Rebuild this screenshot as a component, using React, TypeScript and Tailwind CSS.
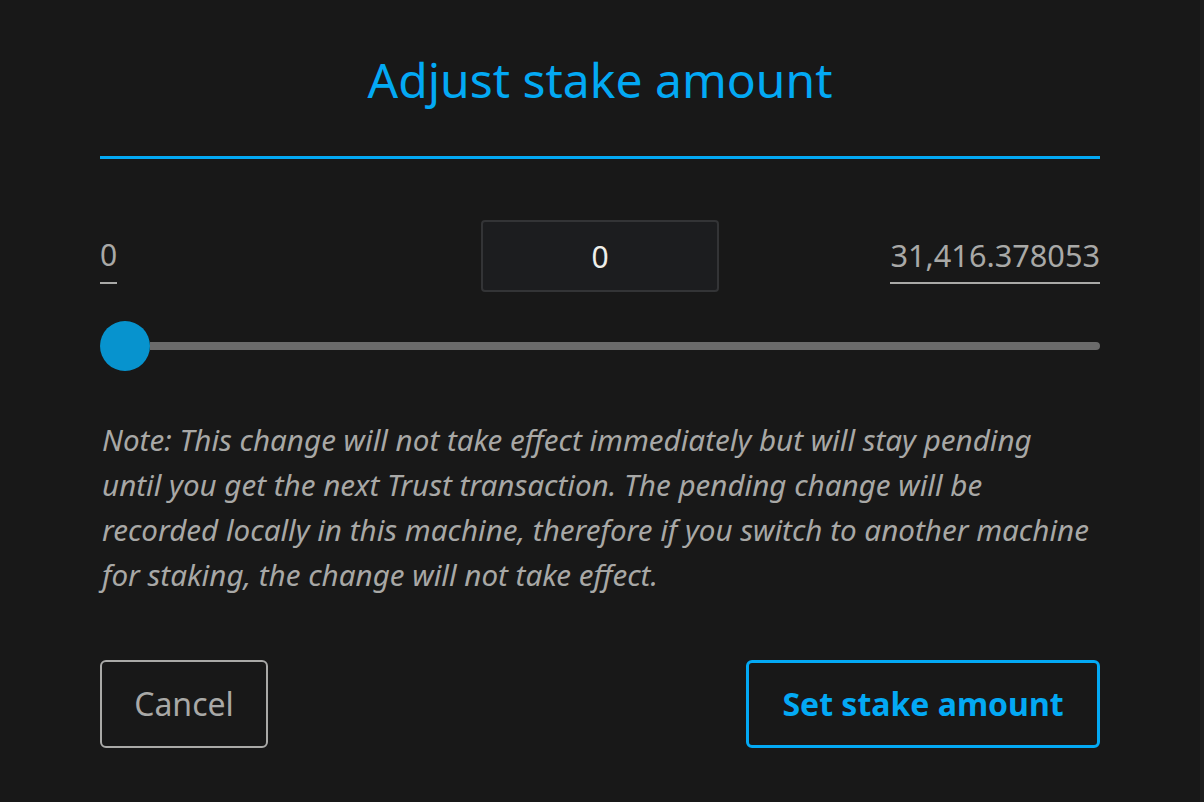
const Ghost = ({className, children}: {className: string, children: React.ReactNode}) => (
  <div className={`absolute text-[#1e1f21] whitespace-nowrap ${className}`}>{children}</div>
);

const App = () => {
  return (
    <div
      className="relative w-[1204px] h-[802px] overflow-hidden bg-[#181818] flex"
      style={{fontFamily: '"Noto Sans", "Open Sans", sans-serif'}}
    >
      {/* faint page content behind the dialog */}
      <Ghost className="left-0 top-[160px] text-[48px]">ontitan</Ghost>
      <Ghost className="left-[508px] top-[150px] text-[26px]">Status</Ghost>
      <Ghost className="left-[508px] top-[292px] text-[26px]">Stake Rate ⓘ</Ghost>
      <Ghost className="left-[508px] top-[355px] text-[26px]">Trust Weight ⓘ</Ghost>
      <Ghost className="left-[30px] top-[330px] text-[26px]">User</Ghost>

      <div className="relative w-[1200px] h-full bg-[#181818] flex flex-col px-[100px]">
        <h1 className="pt-[48px] text-center text-[48px] leading-[64px] text-[#03a9f4]">Adjust stake amount</h1>
        <div className="mt-[44px] h-[3px] bg-[#03a9f4]"></div>

        <div className="mt-[61px] flex items-start">
          <div className="flex-1 flex">
            <div className="pt-[17px] flex flex-col">
              <span className="text-[30px] leading-[36px] text-[#a9a9a7]">0</span>
              <span className="mt-[9px] h-[2px] bg-[#a9a9a7]"></span>
            </div>
          </div>
          <div className="w-[238px] h-[72px] rounded bg-[#1c1d1f] border-2 border-[#333436] flex items-center justify-center text-[30px] text-[#eeeeea]">
            0
          </div>
          <div className="flex-1 flex justify-end">
            <div className="pt-[17px] flex flex-col">
              <span className="text-[30.7px] leading-[36px] text-[#a9a9a7]">31,416.378053</span>
              <span className="mt-[9px] h-[2px] bg-[#a9a9a7]"></span>
            </div>
          </div>
        </div>

        <div className="mt-[29px] h-[50px] flex items-center">
          <div className="w-[50px] h-[50px] rounded-full bg-[#0793ce] shrink-0"></div>
          <div className="flex-1 h-[8px] rounded-r-full bg-[#6b6b6b]"></div>
        </div>

        <p className="mt-[46px] pl-[2px] whitespace-nowrap text-[29.6px] leading-[45px] italic text-[#a8a8a6]">
          Note: This change will not take effect immediately but will stay pending<br />
          until you get the next Trust transaction. The pending change will be<br />
          recorded locally in this machine, therefore if you switch to another machine<br />
          for staking, the change will not take effect.
        </p>

        <div className="mt-[63px] flex justify-between">
          <button className="w-[168px] h-[88px] rounded-md border-2 border-[#a9a9a7] text-[32px] text-[#a9a9a7]">Cancel</button>
          <button className="w-[354px] h-[88px] rounded-md border-[3px] border-[#03a9f4] text-[32px] font-bold text-[#03a9f4]">Set stake amount</button>
        </div>
      </div>
      <div className="flex-1 bg-[#1d1d1d]"></div>
    </div>
  );
};

export default App;
